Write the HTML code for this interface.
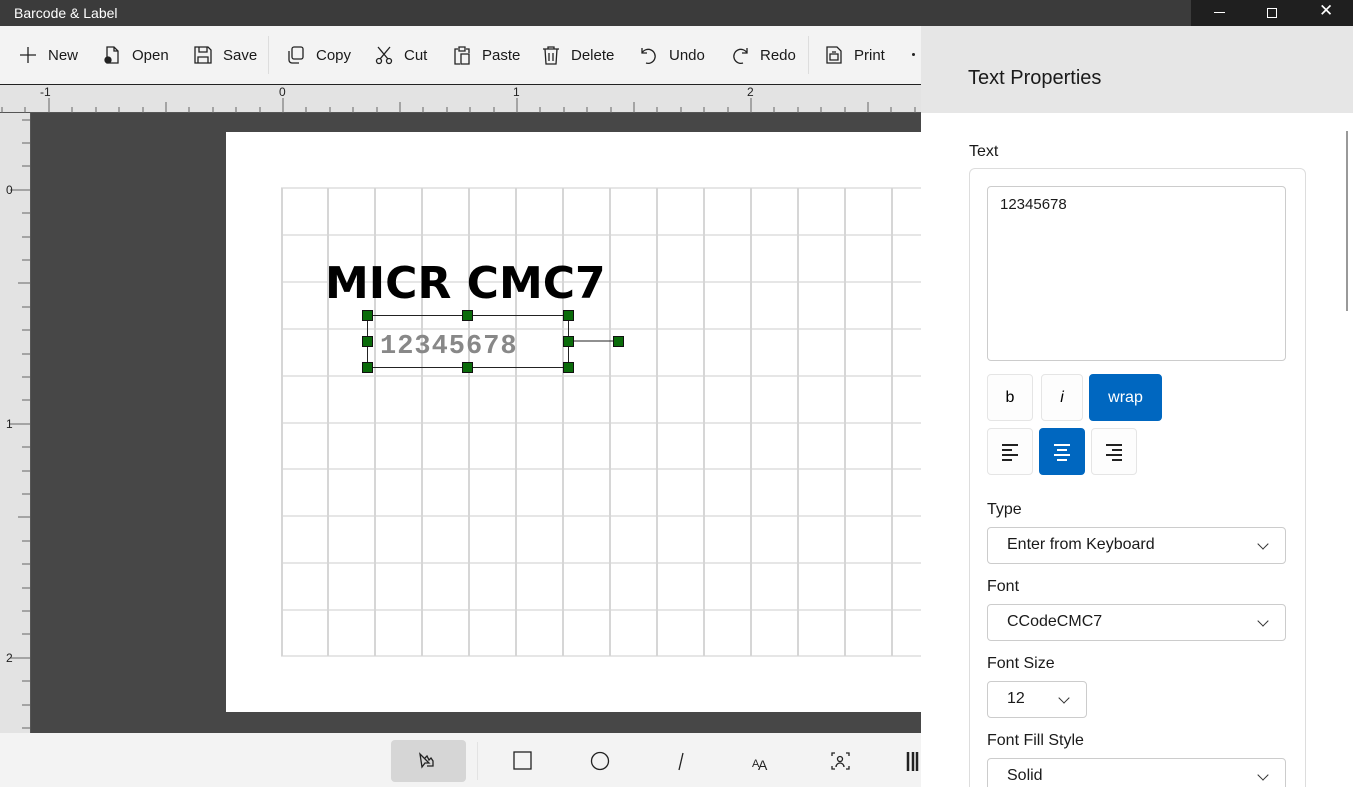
<!DOCTYPE html>
<html><head><meta charset="utf-8"><style>
*{margin:0;padding:0;box-sizing:border-box}
html,body{width:1353px;height:787px;overflow:hidden}
body{font-family:"Segoe UI","Liberation Sans",sans-serif;background:#fff;position:relative}
.a{position:absolute}
.tb{top:26px;left:0;width:921px;height:58px;background:#f3f3f3}
.btn{position:absolute;top:45px;font-size:15px;color:#1a1a1a;display:flex;align-items:center;gap:10px}
.btn svg{width:20px;height:20px;fill:none;stroke:#222;stroke-width:1.3}
.lbl{position:absolute;font-size:16px;color:#1a1a1a}
.dd{position:absolute;left:987px;width:299px;height:37px;border:1px solid #ccc;border-radius:4px;font-size:16px;padding:8px 19px;color:#1a1a1a}
.dd:after{content:"";position:absolute;right:18px;top:12px;width:7px;height:7px;border-right:1.3px solid #333;border-bottom:1.3px solid #333;transform:rotate(45deg)}
.sb{position:absolute;width:46px;height:47px;border:1px solid #e5e5e5;border-radius:4px;background:#fdfdfd;display:flex;align-items:center;justify-content:center;font-size:16px}
</style></head><body>
<div class="a" style="top:0;left:0;width:1191px;height:26px;background:#3b3b3b;color:#fff;font-size:14px;padding:5px 14px">Barcode &amp; Label</div>
<div class="a" style="top:0;left:1191px;width:162px;height:26px;background:#1f1f1f;color:#fff">
<div class="a" style="left:23px;top:12px;width:11px;height:1px;background:#fff"></div>
<div class="a" style="left:76px;top:8px;width:10px;height:10px;border:1px solid #fff"></div>
<div class="a" style="left:128px;top:1px;font-size:17px">✕</div></div>
<div class="a tb"></div>
<div class="btn" style="left:18px"><svg viewBox="0 0 20 20"><path d="M10 2v16M2 10h16"/></svg>New</div>
<div class="btn" style="left:102px"><svg viewBox="0 0 20 20"><path d="M5 2h7l4 4v12H5zM12 2v4h4"/><circle cx="6" cy="15" r="3" fill="#222"/></svg>Open</div>
<div class="btn" style="left:193px"><svg viewBox="0 0 20 20"><path d="M2 2h13l3 3v13H2zM6 2v5h8V2M5 18v-6h10v6"/></svg>Save</div>
<div class="a" style="left:268px;top:36px;width:1px;height:38px;background:#ddd"></div>
<div class="btn" style="left:286px"><svg viewBox="0 0 20 20"><rect x="6" y="2" width="11" height="12" rx="2"/><path d="M3 6v9a3 3 0 0 0 3 3h7"/></svg>Copy</div>
<div class="btn" style="left:374px"><svg viewBox="0 0 20 20"><path d="M4 2l10 12M16 2L6 14"/><circle cx="5" cy="16" r="2.5"/><circle cx="15" cy="16" r="2.5"/></svg>Cut</div>
<div class="btn" style="left:452px"><svg viewBox="0 0 20 20"><path d="M6 4H3v15h5M14 4h3v4M7 2h6v4H7zM9 9h8v10H9z"/></svg>Paste</div>
<div class="btn" style="left:541px"><svg viewBox="0 0 20 20"><path d="M2 4h16M7 4V2h6v2M4 4l1 15h10l1-15M8 8v8M12 8v8"/></svg>Delete</div>
<div class="btn" style="left:639px"><svg viewBox="0 0 20 20"><path d="M3 3v5h5M3 8a7 7 0 1 1 4 10"/></svg>Undo</div>
<div class="btn" style="left:730px"><svg viewBox="0 0 20 20"><path d="M17 3v5h-5M17 8a7 7 0 1 0-4 10"/></svg>Redo</div>
<div class="a" style="left:808px;top:36px;width:1px;height:38px;background:#ddd"></div>
<div class="btn" style="left:824px"><svg viewBox="0 0 20 20"><path d="M3 2h10l4 4v12H3zM6 9h8v6H6zM8 7h4"/></svg>Print</div>
<div class="a" style="left:912px;top:53px;width:3px;height:3px;background:#222;border-radius:50%"></div>

<svg class="a" style="left:0;top:84px" width="921" height="649">
<rect width="921" height="649" fill="#e3e3e3"/>
<line x1="0" y1="0.5" x2="921" y2="0.5" stroke="#222"/>
<line x1="0" y1="28.5" x2="921" y2="28.5" stroke="#555"/>
<line x1="30.5" y1="28" x2="30.5" y2="649" stroke="#555"/>
<g stroke="#666">
<path d="M2 23v6M25 23v6M49 14v15M72 23v6M96 23v6M119 23v6M143 23v6M166 18v11M189 23v6M213 23v6M236 23v6M260 23v6M283 14v15M306 23v6M330 23v6M353 23v6M377 23v6M400 18v11M423 23v6M447 23v6M470 23v6M494 23v6M517 14v15M540 23v6M564 23v6M587 23v6M611 23v6M634 18v11M657 23v6M681 23v6M704 23v6M728 23v6M751 14v15M774 23v6M798 23v6M821 23v6M845 23v6M868 18v11M891 23v6M915 23v6"/>
<path d="M22 36h8M22 59h8M22 82h8M10 106h20M22 129h8M22 153h8M22 176h8M18 199h12M22 223h8M22 246h8M22 270h8M22 293h8M10 340h20M22 316h8M22 363h8M22 387h8M22 410h8M18 433h12M22 457h8M22 480h8M22 504h8M22 527h8M10 574h20M22 550h8M22 597h8M22 621h8M22 644h8"/>
</g>
<g font-size="12" fill="#222" font-family="Liberation Sans"><text x="40" y="12">-1</text><text x="279" y="12">0</text><text x="513" y="12">1</text><text x="747" y="12">2</text>
<text x="6" y="110">0</text><text x="6" y="344">1</text><text x="6" y="578">2</text></g>
<rect x="31" y="29" width="890" height="620" fill="#474747"/>
<rect x="226" y="48" width="695" height="580" fill="#fff"/>
<g stroke="#e6e6e6" stroke-width="2">
<path d="M281 104h640M281 151h640M281 198h640M281 245h640M281 292h640M281 339h640M281 385h640M281 432h640M281 479h640M281 526h640M281 572h640"/></g>
<g stroke="#d6d6d6" stroke-width="2">
<path d="M282 104v468M328 104v468M375 104v468M422 104v468M469 104v468M516 104v468M563 104v468M610 104v468M657 104v468M704 104v468M751 104v468M798 104v468M845 104v468M892 104v468"/>
</g>
<text x="325" y="214" font-family="DejaVu Sans,Verdana" font-weight="bold" font-size="44" fill="#000">MICR CMC7</text>
<text x="380" y="269" font-family="Liberation Mono" font-weight="bold" font-size="27" fill="#888" letter-spacing="1">12345678</text>
<g stroke="#222" fill="none"><rect x="367.5" y="231.5" width="201" height="52"/><path d="M568 257h51"/></g>
<g fill="#0a6b0a" stroke="#111">
<rect x="362.5" y="226.5" width="10" height="10"/><rect x="462.5" y="226.5" width="10" height="10"/><rect x="563.5" y="226.5" width="10" height="10"/>
<rect x="362.5" y="252.5" width="10" height="10"/><rect x="563.5" y="252.5" width="10" height="10"/><rect x="613.5" y="252.5" width="10" height="10"/>
<rect x="362.5" y="278.5" width="10" height="10"/><rect x="462.5" y="278.5" width="10" height="10"/><rect x="563.5" y="278.5" width="10" height="10"/></g>
</svg>

<div class="a" style="left:0;top:733px;width:921px;height:54px;background:#f3f3f3"></div>
<div class="a" style="left:391px;top:740px;width:75px;height:42px;background:#d6d6d6;border-radius:4px"></div>
<div class="a" style="left:477px;top:742px;width:1px;height:38px;background:#e3e3e3"></div>
<svg class="a" style="left:400px;top:745px" width="521" height="34" fill="none" stroke="#222" stroke-width="1.3">
<path d="M20 9l9 9h-4l-3 4zM25 13l2-2 2 4 2-2 2 3v5h-6"/>
<rect x="114" y="7" width="17" height="17"/><circle cx="200" cy="16" r="8.5"/><path d="M283 8l-4 17"/>
<text x="352" y="22" font-size="11" fill="#222" stroke="none" font-family="Liberation Sans">A</text><text x="358" y="25" font-size="14" fill="#222" stroke="none" font-family="Liberation Sans">A</text>
<path d="M432 11v-3h3M446 8h3v3M432 21v3h3M446 24h3v-3"/><circle cx="440" cy="14" r="2.5"/><path d="M436 22a4 4 0 0 1 8 0"/>
<path d="M508 7v19M513 7v19M517 7v19" stroke-width="2.5"/></svg>

<div class="a" style="left:921px;top:26px;width:432px;height:87px;background:#e6e6e6"></div>
<div class="a" style="left:968px;top:67px;font-size:20px;color:#1a1a1a">Text Properties</div>
<div class="a" style="left:1346px;top:131px;width:2px;height:180px;background:#999"></div>
<div class="lbl" style="left:969px;top:143px">Text</div>
<div class="a" style="left:969px;top:168px;width:337px;height:640px;border:1px solid #ddd;border-radius:6px"></div>
<div class="a" style="left:987px;top:186px;width:299px;height:175px;border:1px solid #ccc;border-radius:4px;padding:9px 12px;font-size:15px;color:#1a1a1a">12345678</div>
<div class="sb" style="left:987px;top:374px;height:47px">b</div>
<div class="sb" style="left:1041px;top:374px;width:42px;font-style:italic">i</div>
<div class="sb" style="left:1089px;top:374px;width:73px;background:#0067c0;border-color:#0067c0;color:#fff">wrap</div>
<div class="sb" style="left:987px;top:428px"><svg width="18" height="18" stroke="#222" stroke-width="2"><path d="M1 2h16M1 7h10M1 12h16M1 17h10"/></svg></div>
<div class="sb" style="left:1039px;top:428px;background:#0067c0;border-color:#0067c0"><svg width="18" height="18" stroke="#fff" stroke-width="2"><path d="M1 2h16M4 7h10M1 12h16M4 17h10"/></svg></div>
<div class="sb" style="left:1091px;top:428px"><svg width="18" height="18" stroke="#222" stroke-width="2"><path d="M1 2h16M7 7h10M1 12h16M7 17h10"/></svg></div>
<div class="lbl" style="left:987px;top:501px">Type</div>
<div class="dd" style="top:527px">Enter from Keyboard</div>
<div class="lbl" style="left:987px;top:578px">Font</div>
<div class="dd" style="top:604px">CCodeCMC7</div>
<div class="lbl" style="left:987px;top:655px">Font Size</div>
<div class="dd" style="top:681px;width:100px">12</div>
<div class="lbl" style="left:987px;top:732px">Font Fill Style</div>
<div class="dd" style="top:758px">Solid</div>
</body></html>
